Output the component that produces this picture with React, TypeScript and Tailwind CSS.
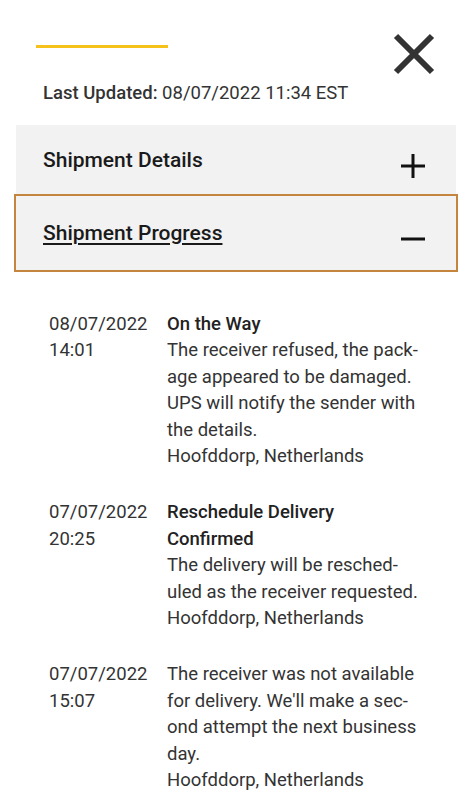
import { useState } from "react";

type Activity = { date: string; time: string; title?: string; body: string; place: string };

const ACTIVITY: Activity[] = [
  {
    date: "08/07/2022",
    time: "14:01",
    title: "On the Way",
    body: "The receiver refused, the pack\u00ADage appeared to be damaged. UPS will notify the sender with the details.",
    place: "Hoofddorp, Netherlands",
  },
  {
    date: "07/07/2022",
    time: "20:25",
    title: "Reschedule Delivery Confirmed",
    body: "The delivery will be resched\u00ADuled as the receiver requested.",
    place: "Hoofddorp, Netherlands",
  },
  {
    date: "07/07/2022",
    time: "15:07",
    body: "The receiver was not available for delivery. We'll make a sec\u00ADond attempt the next business day.",
    place: "Hoofddorp, Netherlands",
  },
];

function CloseIcon() {
  return (
    <svg width="44" height="44" viewBox="0 0 44 44" aria-hidden>
      <path d="M4 4 L40 40 M40 4 L4 40" stroke="#333" strokeWidth="6" strokeLinecap="butt" />
    </svg>
  );
}

function Toggle({ open }: { open: boolean }) {
  return (
    <svg width="24" height="24" viewBox="0 0 24 24" aria-hidden>
      <path d="M0 12 H24" stroke="#111" strokeWidth="3" />
      {!open && <path d="M12 0 V24" stroke="#111" strokeWidth="3" />}
    </svg>
  );
}

export default function App() {
  const [details, setDetails] = useState(false);
  const [progress, setProgress] = useState(true);

  return (
    <div className="min-h-[800px] bg-white font-['Roboto',sans-serif] text-[#222]">
      {/* header */}
      <div className="flex items-start justify-between pl-[36px] pr-[29px] pt-[32px]">
        <div className="mt-[13px] h-[3px] w-[132px] bg-[#f5c21b]" />
        <button aria-label="Close" className="-mr-[1px]"><CloseIcon /></button>
      </div>
      <p className="mt-[6px] pl-[43px] text-[18.5px] leading-[22px] text-[#333]">
        <span className="font-medium">Last Updated:</span> 08/07/2022 11:34 EST
      </p>

      {/* accordion */}
      <div className="ml-[16px] mr-[8px] mt-[21px] bg-[#f2f2f2]">
        <button onClick={() => setDetails(!details)} className="flex h-[71px] w-full items-center justify-between pl-[27px] pr-[31px] text-left">
          <span className="text-[21px] font-medium leading-none text-[#1a1a1a]">Shipment Details</span>
          <span className="mt-[11px]"><Toggle open={details} /></span>
        </button>
        <button onClick={() => setProgress(!progress)} className="flex h-[74px] w-full items-center justify-between pl-[27px] pr-[31px] text-left outline-2 outline-[#c5853f]">
          <span className="text-[21px] font-medium leading-none text-[#1a1a1a] underline decoration-[1.5px] underline-offset-[3px]">Shipment Progress</span>
          <span className="mt-[12px]"><Toggle open={progress} /></span>
        </button>
      </div>

      {/* progress list */}
      {progress && (
        <div className="flex flex-col gap-[30px] pl-[49px] pr-[30px] pt-[41px] text-[18.5px] leading-[26.4px] text-[#333]">
          {ACTIVITY.map((a, i) => (
            <div key={i} className="flex">
              <div className="w-[118px] shrink-0">
                <p>{a.date}</p>
                <p>{a.time}</p>
              </div>
              <div className="w-[258px]">
                {a.title && <p className="font-medium text-[#222]">{a.title}</p>}
                <p>{a.body}</p>
                <p>{a.place}</p>
              </div>
            </div>
          ))}
        </div>
      )}
    </div>
  );
}
